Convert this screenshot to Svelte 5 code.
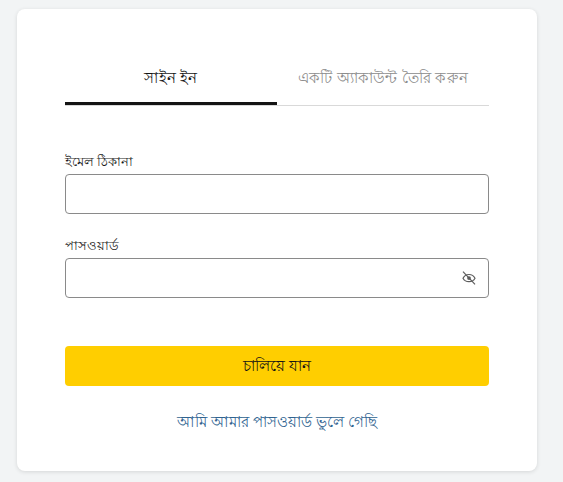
<script>
    let email = $state("");
    let password = $state("");
</script>

<div class="page">
    <div class="card">
        <div class="tabs">
            <div class="tab active">সাইন ইন</div>
            <div class="tab">একটি অ্যাকাউন্ট তৈরি করুন</div>
        </div>

        <form class="form">
            <label class="field">
                <span class="label">ইমেল ঠিকানা</span>
                <input class="input" type="email" bind:value={email} />
            </label>

            <label class="field">
                <span class="label">পাসওয়ার্ড</span>
                <span class="input-wrap">
                    <input class="input" type="password" bind:value={password} />
                    <svg class="eye" viewBox="0 0 16 16" width="16" height="16" fill="none" stroke="#5c5c5c" stroke-width="1.2">
                        <path d="M2 8.2C3.2 5.9 5.4 4.5 8 4.5s4.8 1.4 6 3.7c-1.2 2.2-3.4 3.5-6 3.5s-4.8-1.3-6-3.5z" />
                        <circle cx="8" cy="8.1" r="1.9" fill="#5c5c5c" stroke="none" />
                        <path d="M2 1.7l12 12.6" />
                    </svg>
                </span>
            </label>

            <button class="submit" type="button">চালিয়ে যান</button>
        </form>

        <a class="forgot" href="#forgot">আমি আমার পাসওয়ার্ড ভুলে গেছি</a>
    </div>
</div>

<style>
    :global(body) {
        margin: 0;
        background: #f2f4f5;
    }

    .page {
        box-sizing: border-box;
        width: 563px;
        height: 482px;
        padding: 9px 26px 11px 17px;
        font-family: "Noto Sans", "Liberation Sans", sans-serif;
    }

    .card {
        box-sizing: border-box;
        height: 462px;
        padding: 48px 48px 0;
        background: #fff;
        border-radius: 8px;
        box-shadow: 0 1px 4px #0000001f;
    }

    .tabs {
        display: flex;
        border-bottom: 1px solid #d9d9d9;
    }

    .tab {
        flex: 1;
        height: 48px;
        padding-top: 10px;
        box-sizing: border-box;
        text-align: center;
        font-size: 15px;
        line-height: 20px;
        letter-spacing: 0.25px;
        color: #8c8c8c;
    }

    .tab.active {
        color: #141414;
        font-weight: 500;
        border-bottom: 3px solid #141414;
        margin-bottom: -1px;
    }

    .form {
        display: flex;
        flex-direction: column;
        padding-top: 46px;
    }

    .field {
        display: flex;
        flex-direction: column;
        margin-bottom: 22px;
    }

    .label {
        font-size: 13px;
        line-height: 18px;
        margin-bottom: 4px;
        color: #1a1a1a;
    }

    .input-wrap {
        position: relative;
        display: block;
    }

    .input {
        box-sizing: border-box;
        display: block;
        width: 100%;
        height: 40px;
        border: 1px solid #8a8a8a;
        border-radius: 4px;
        background: #fff;
    }

    .eye {
        position: absolute;
        top: 12px;
        right: 12px;
    }

    .submit {
        height: 40px;
        margin-top: 26px;
        border: 0;
        border-radius: 4px;
        background: #ffce00;
        color: #141414;
        font-family: inherit;
        font-size: 15px;
        font-weight: 500;
    }

    .forgot {
        display: block;
        margin-top: 25px;
        text-align: center;
        font-size: 15px;
        line-height: 20px;
        color: #2f6390;
        text-decoration: none;
    }
</style>
